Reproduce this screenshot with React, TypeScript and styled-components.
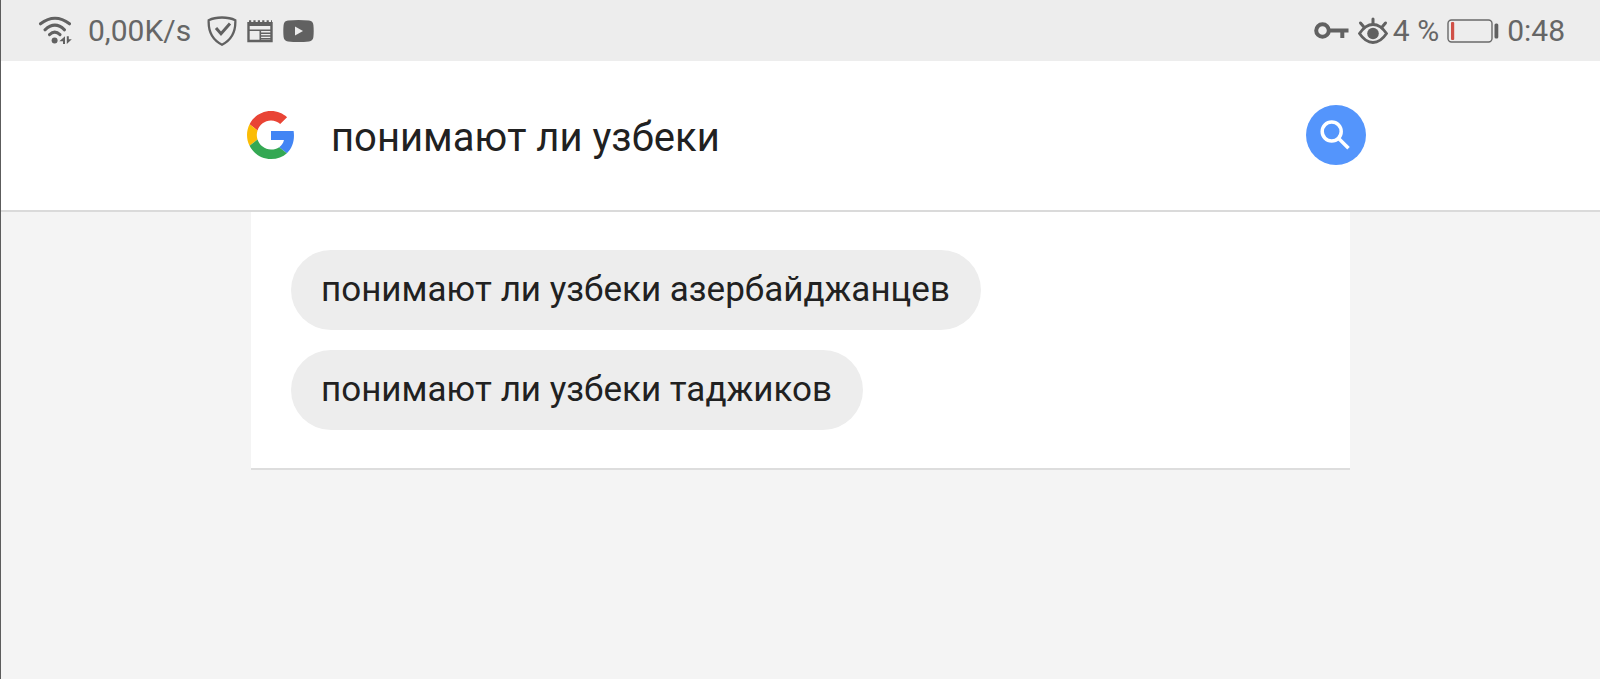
import React, { useState } from "react";
import styled, { createGlobalStyle } from "styled-components";

const GlobalStyle = createGlobalStyle`
  *, *::before, *::after { box-sizing: border-box; }
  html { background: #f4f4f4; }
  body { margin: 0; font-family: Roboto, "Noto Sans", sans-serif; color: #212121; }
`;

const Page = styled.div`
  min-height: 100vh;
  border-left: 1px solid #5c5c5c;
  background: #f4f4f4;
`;

const StatusBar = styled.div`
  display: flex;
  align-items: center;
  justify-content: space-between;
  height: 61px;
  padding: 0 35px 0 37px;
  background: #ededed;
  color: #666666;
  font-size: 30px;
  line-height: 36px;
`;

const StatusGroup = styled.div<{ $gap: number }>`
  display: flex;
  align-items: center;
  gap: ${(p) => p.$gap}px;
`;

const StatusText = styled.span<{ $spaced?: boolean }>`
  padding: 0 ${(p) => (p.$spaced ? 6 : 0)}px;
  font-weight: 400;
  white-space: nowrap;
`;

const Icon = styled.svg`
  display: block;
  flex: none;
`;

const Header = styled.header`
  background: #ffffff;
  border-bottom: 2px solid #dadada;
`;

const SearchForm = styled.form`
  display: flex;
  align-items: center;
  max-width: 1131px;
  height: 149px;
  margin: 0 auto;
  padding: 0 0 2px 12px;
`;

const HomeLink = styled.a`
  display: block;
  flex: none;
`;

const SearchInput = styled.input`
  flex: 1;
  min-width: 0;
  margin: 0 36px;
  padding: 6px 0 0;
  border: 0;
  outline: 0;
  background: transparent;
  color: #212121;
  font: 400 40px/48px Roboto, "Noto Sans", sans-serif;
`;

const SearchButton = styled.button`
  display: grid;
  place-items: center;
  flex: none;
  width: 60px;
  height: 60px;
  padding: 0;
  border: 0;
  border-radius: 50%;
  background: #5495fc;
  color: #ffffff;
  cursor: pointer;
`;

const Panel = styled.main`
  display: flex;
  flex-direction: column;
  align-items: flex-start;
  gap: 20px;
  max-width: 1099px;
  margin: 0 auto;
  padding: 38px 40px;
  background: #ffffff;
  border-bottom: 2px solid #dddddd;
`;

const Chip = styled.a`
  padding: 20px 31px 20px 30px;
  border-radius: 40px;
  background: #ededed;
  color: #212121;
  font-size: 35px;
  line-height: 40px;
  text-decoration: none;
`;

const WifiIcon = () => (
  <Icon width="34" height="30" viewBox="38 16 34 30" fill="none" stroke="#616161" strokeWidth="3" strokeLinecap="round">
    <path d="M40.500 23.800 Q55 12.600 69.500 23.800M45 29.800 Q55 20.600 64.500 29.800M49.500 34.600 Q54.800 29.600 60 34.600" />
    <circle cx="54.600" cy="40.500" r="3" fill="#616161" stroke="none" />
    <path d="M59.300 41.300 L65 36.300 V44 H63 V41.300ZM71.800 39.200 L66.800 44 V36.300 H68.800 V39.200Z" fill="#616161" stroke="none" />
  </Icon>
);

const ShieldIcon = () => (
  <Icon width="30" height="30" viewBox="0 0 30 30" fill="none" stroke="#616161">
    <path d="M15 1.500 C20 1.500 24.500 2.300 28.300 4.200 C28.800 15 25.500 23.500 15 28.700 C4.500 23.500 1.200 15 1.700 4.200 C5.500 2.300 10 1.500 15 1.500Z" strokeWidth="2.300" />
    <path d="M9 12 L14 17.800 L23 7.500" strokeWidth="3" />
  </Icon>
);

const NewsIcon = () => (
  <Icon width="26" height="24" viewBox="0 0 26 24" fill="none" stroke="#616161">
    <path d="M1.500 3 V22 H24.500 V3" strokeWidth="2.400" />
    <path d="M1 5 H25" strokeWidth="4" />
    <path d="M2 2.300 H25" strokeWidth="2" strokeDasharray="2.200 2.200" />
    <path d="M2 11.300 H24M13.300 11 V21" strokeWidth="1.600" />
    <path d="M14 14.300 H24M14 17 H24M14 19.700 H24" strokeWidth="1.500" />
  </Icon>
);

const VideoIcon = () => (
  <Icon width="31" height="22" viewBox="0 0 31 22">
    <path d="M5 .6 Q15.500 -.4 26 .6 Q30 1 30.400 5 Q31 11 30.400 17 Q30 21 26 21.400 Q15.500 22.400 5 21.400 Q1 21 .6 17 Q0 11 .6 5 Q1 1 5 .6Z" fill="#616161" />
    <path d="M12 6.500 V15.500 L20 11Z" fill="#ededed" />
  </Icon>
);

const KeyIcon = () => (
  <Icon width="36" height="17" viewBox="0 0 36 17" fill="none" stroke="#616161">
    <circle cx="8.500" cy="8.500" r="6.300" strokeWidth="4" />
    <path d="M15 8.500 H34.500M28.300 8.500 V16" strokeWidth="4" />
  </Icon>
);

const EyeIcon = () => (
  <Icon width="30" height="28" viewBox="0 0 30 28" fill="none" stroke="#616161" strokeLinecap="round">
    <path d="M1.500 16.500 Q7.500 7.500 15 7.500 Q22.500 7.500 28.500 16.500 Q22.500 25.500 15 25.500 Q7.500 25.500 1.500 16.500Z" strokeWidth="2.800" />
    <circle cx="15" cy="16.500" r="5.800" fill="#616161" stroke="none" />
    <path d="M15 7 V2M5.500 9.500 L2.500 6M24.500 9.500 L27.500 6" strokeWidth="3" />
  </Icon>
);

const BatteryIcon = () => (
  <Icon width="52" height="24" viewBox="0 0 52 24" fill="none">
    <rect x="1" y="1" width="44" height="22" rx="3.500" stroke="#6a6a6a" strokeWidth="1.400" />
    <rect x="4" y="3" width="3.200" height="18" rx="1" fill="#d05047" />
    <rect x="47.500" y="4.500" width="3.800" height="15" rx="1.500" fill="#616161" />
  </Icon>
);

const GoogleIcon = () => (
  <Icon width="48" height="48" viewBox="0 0 48 48">
    <path fill="#e94435" d="M24 9.500c3.540 0 6.710 1.220 9.210 3.600l6.850-6.850C35.900 2.380 30.470 0 24 0 14.620 0 6.510 5.380 2.560 13.220l7.980 6.190C12.430 13.720 17.740 9.500 24 9.500z" />
    <path fill="#4285f4" d="M46.980 24.550c0-1.570-.15-3.090-.38-4.550H24v9.020h12.940c-.58 2.960-2.260 5.480-4.780 7.180l7.730 6c4.510-4.180 7.090-10.360 7.090-17.650z" />
    <path fill="#fbbc05" d="M10.530 28.590c-.48-1.450-.76-2.990-.76-4.590s.27-3.140.76-4.590l-7.980-6.190C.92 16.460 0 20.120 0 24c0 3.880.92 7.540 2.560 10.780l7.970-6.190z" />
    <path fill="#34a853" d="M24 48c6.480 0 11.930-2.130 15.890-5.810l-7.730-6c-2.150 1.450-4.920 2.300-8.160 2.300-6.260 0-11.570-4.220-13.470-9.910l-7.980 6.190C6.510 42.620 14.620 48 24 48z" />
  </Icon>
);

const SearchIcon = () => (
  <Icon width="32" height="30" viewBox="0 0 32 30" fill="none" stroke="currentColor" strokeWidth="3.500">
    <circle cx="11.700" cy="11.500" r="9.500" />
    <path d="M18.200 18 L28.500 28.300" />
  </Icon>
);

const suggestions = ["понимают ли узбеки азербайджанцев", "понимают ли узбеки таджиков"];

export default function App() {
  const [query, setQuery] = useState("понимают ли узбеки");

  return (
    <Page>
      <GlobalStyle />
      <StatusBar>
        <StatusGroup $gap={10}>
          <WifiIcon />
          <StatusText $spaced>0,00K/s</StatusText>
          <ShieldIcon />
          <NewsIcon />
          <VideoIcon />
        </StatusGroup>
        <StatusGroup $gap={8}>
          <KeyIcon />
          <StatusGroup $gap={5}>
            <EyeIcon />
            <StatusText>4 %</StatusText>
          </StatusGroup>
          <BatteryIcon />
          <StatusText>0:48</StatusText>
        </StatusGroup>
      </StatusBar>
      <Header>
        <SearchForm role="search" onSubmit={(e) => e.preventDefault()}>
          <HomeLink href="#" aria-label="Google">
            <GoogleIcon />
          </HomeLink>
          <SearchInput aria-label="Поиск" value={query} onChange={(e) => setQuery(e.target.value)} />
          <SearchButton type="submit" aria-label="Найти">
            <SearchIcon />
          </SearchButton>
        </SearchForm>
      </Header>
      <Panel>
        {suggestions.map((text) => (
          <Chip key={text} href="#">
            {text}
          </Chip>
        ))}
      </Panel>
    </Page>
  );
}
